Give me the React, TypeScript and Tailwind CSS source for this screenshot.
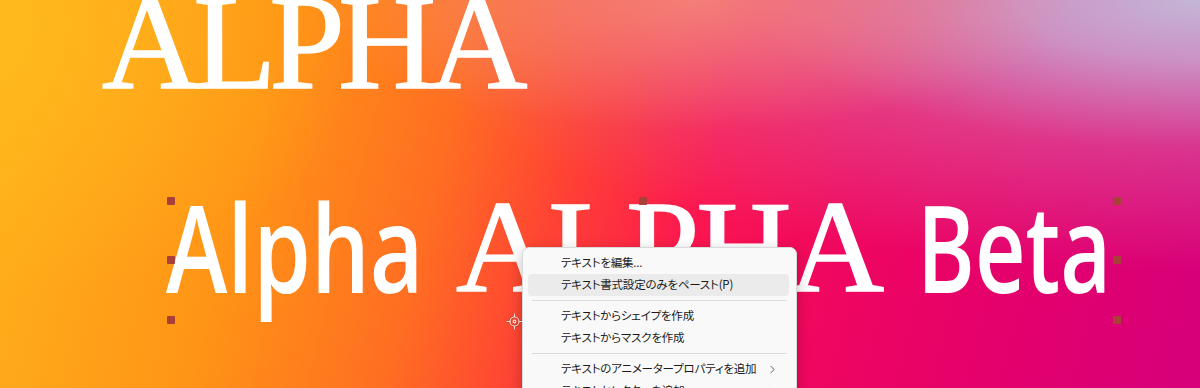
import React from 'react'
import { ChevronRight } from 'lucide-react'

const handles = [
  [171, 201], [171, 260], [171, 320],
  [643, 201], [643, 320],
  [1117, 201], [1117, 260], [1117, 320],
]

type Item = { label: string; hover?: boolean; sub?: boolean } | 'sep'

const menuItems: Item[] = [
  { label: 'テキストを編集...' },
  { label: 'テキスト書式設定のみをペースト(P)', hover: true },
  'sep',
  { label: 'テキストからシェイプを作成' },
  { label: 'テキストからマスクを作成' },
  'sep',
  { label: 'テキストのアニメータープロパティを追加', sub: true },
  { label: 'テキストセレクターを追加', sub: true },
]

const ContextMenu = () => {
  return (
    <div className="absolute left-[522px] top-[247px] w-[275px] h-[160px] rounded-[7px] bg-[#f9f9f9] border border-[#d9d9d9] shadow-[0_4px_14px_rgba(0,0,0,0.25)] pt-[4px] flex flex-col font-['Noto_Sans_CJK_JP',sans-serif] text-[11.5px] tracking-[-0.2px] text-[#1b1b1b] [font-feature-settings:'palt']">
      {menuItems.map((item, i) =>
        item === 'sep' ? (
          <div key={i} className="h-[9px] flex items-center px-[9px]">
            <div className="h-px w-full bg-[#dcdcdc]" />
          </div>
        ) : (
          <div
            key={i}
            className={`ml-[5px] mr-[7px] h-[22px] rounded-[4px] flex items-center pl-[33px] pr-[10px] whitespace-nowrap ${item.hover ? 'bg-[#ebebeb]' : ''}`}
          >
            <span className="flex-1 leading-none">{item.label}</span>
            {item.sub && <ChevronRight size={13} strokeWidth={1.4} className="text-[#333]" />}
          </div>
        )
      )}
    </div>
  )
}

const Anchor = () => (
  <svg className="absolute left-[506px] top-[313px]" width="17" height="17" viewBox="0 0 17 17">
    <g stroke="#7a2a1a" strokeWidth="2.6" fill="none" opacity="0.35">
      <circle cx="8.5" cy="8.5" r="4.5" />
      <path d="M8.5 0.5v3.5M8.5 13v3.5M0.5 8.5h3.5M13 8.5h3.5" />
    </g>
    <g stroke="#ffe9e0" strokeWidth="1.2" fill="none">
      <circle cx="8.5" cy="8.5" r="4.5" />
      <path d="M8.5 0.5v3.5M8.5 13v3.5M0.5 8.5h3.5M13 8.5h3.5" />
      <circle cx="8.5" cy="8.5" r="1.3" />
    </g>
  </svg>
)

export default function App() {
  return (
    <div className="relative w-[1200px] h-[388px] overflow-hidden bg-[linear-gradient(104deg,#ffb41c_0%,#ff9416_22%,#ff6e22_37%,#ff4234_47%,#fb1650_58%,#ef0660_70%,#e2006e_86%,#d6007a_100%)]">
      {/* soft colour glows */}
      <div className="absolute inset-0 bg-[radial-gradient(ellipse_820px_270px_at_100%_0%,rgba(196,182,214,1)_0%,rgba(200,172,212,0.85)_22%,rgba(215,130,180,0.4)_55%,rgba(225,110,160,0)_100%)]" />
      <div className="absolute inset-0 bg-[radial-gradient(ellipse_380px_130px_at_58%_0%,rgba(246,150,125,0.7)_0%,rgba(246,140,120,0)_100%)]" />
      <div className="absolute inset-0 bg-[radial-gradient(ellipse_360px_260px_at_0%_10%,rgba(255,190,30,0.6)_0%,rgba(255,190,30,0)_100%)]" />

      {/* composition layers */}
      <div className="absolute left-[102px] top-[-26px] text-white leading-none text-[136px] font-['Liberation_Serif',serif] tracking-[-7px] [-webkit-text-stroke:1.5px_white] whitespace-nowrap">
        ALPHA
      </div>

      <div className="absolute left-[166px] top-[185px] text-white leading-none text-[122px] font-['Open_Sans',sans-serif] font-semibold origin-left scale-x-[0.76] whitespace-nowrap">
        Alpha
      </div>
      <div className="absolute left-[456px] top-[181px] text-white leading-none text-[132px] font-['Liberation_Serif',serif] tracking-[-3px] [-webkit-text-stroke:1.5px_white] whitespace-nowrap">
        ALPHA
      </div>
      <div className="absolute left-[917px] top-[185px] text-white leading-none text-[122px] font-['Open_Sans',sans-serif] font-semibold origin-left scale-x-[0.72] whitespace-nowrap">
        Beta
      </div>

      {handles.map(([x, y]) => (
        <div
          key={`${x}-${y}`}
          className="absolute w-[8px] h-[8px] bg-[#a8403a] rounded-[1px]"
          style={{ left: x - 4, top: y - 4 }}
        />
      ))}

      <Anchor />
      <ContextMenu />
    </div>
  )
}
